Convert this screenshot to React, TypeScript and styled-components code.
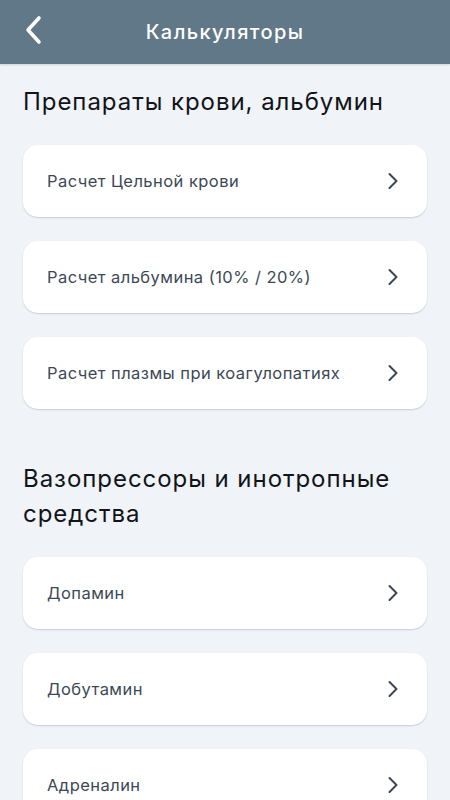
import React from "react";
import styled, { createGlobalStyle } from "styled-components";

const Global = createGlobalStyle`
  html, body { margin: 0; padding: 0; background: #f0f3f8; }
  body { font-family: Inter, "Noto Sans", sans-serif; -webkit-font-smoothing: antialiased; }
  * { box-sizing: border-box; }
`;

const Page = styled.div`
  width: 450px;
  min-height: 800px;
  background: #f0f3f8;
  display: flex;
  flex-direction: column;
`;

const Header = styled.header`
  height: 64px;
  background: #607887;
  display: flex;
  align-items: center;
  justify-content: center;
  position: relative;
  box-shadow: 0 1px 2px rgba(0, 0, 0, 0.15);
`;

const BackButton = styled.button`
  position: absolute;
  left: 18px;
  top: 12px;
  width: 32px;
  height: 36px;
  border: 0;
  padding: 0;
  background: transparent;
  display: flex;
  align-items: center;
  justify-content: center;
`;

const HeaderTitle = styled.h1`
  margin: 0;
  color: #ffffff;
  font-size: 20px;
  font-weight: 500;
  letter-spacing: 1.4px;
`;

const Content = styled.main`
  padding: 20px 23px 0 23px;
  display: flex;
  flex-direction: column;
`;

const Section = styled.section<{ $gap?: number }>`
  display: flex;
  flex-direction: column;
  gap: 24px;
  margin-bottom: ${(p) => p.$gap ?? 0}px;
`;

const SectionTitle = styled.h2`
  margin: 0 0 2px 0;
  font-size: 24px;
  line-height: 35px;
  font-weight: 400;
  color: #111418;
  letter-spacing: 0.95px;
`;

const Card = styled.div`
  height: 72px;
  background: #ffffff;
  border-radius: 15px;
  box-shadow: 0 1px 1.5px rgba(60, 75, 95, 0.22);
  display: flex;
  align-items: center;
  justify-content: space-between;
  padding: 0 28px 0 24px;
`;

const CardLabel = styled.span`
  font-size: 16.5px;
  font-weight: 400;
  color: #3c4855;
  letter-spacing: 0.45px;
`;

const Chevron = () => (
  <svg width="12" height="18" viewBox="0 0 12 18" fill="none">
    <path d="M2.5 2 L9.5 9 L2.5 16" stroke="#3a4756" strokeWidth="2" strokeLinecap="round" strokeLinejoin="round" />
  </svg>
);

const BackIcon = () => (
  <svg width="20" height="30" viewBox="0 0 20 30" fill="none">
    <path d="M15 3 L4 15 L15 27" stroke="#ffffff" strokeWidth="3.6" strokeLinecap="round" strokeLinejoin="round" />
  </svg>
);

const sections = [
  {
    title: "Препараты крови, альбумин",
    items: ["Расчет Цельной крови", "Расчет альбумина (10% / 20%)", "Расчет плазмы при коагулопатиях"],
  },
  {
    title: "Вазопрессоры и инотропные средства",
    items: ["Допамин", "Добутамин", "Адреналин", "Норадреналин"],
  },
];

export default function App() {
  return (
    <Page>
      <Global />
      <Header>
        <BackButton aria-label="Назад">
          <BackIcon />
        </BackButton>
        <HeaderTitle>Калькуляторы</HeaderTitle>
      </Header>
      <Content>
        {sections.map((s, i) => (
          <Section key={s.title} $gap={i === 0 ? 52 : 0}>
            <SectionTitle>{s.title}</SectionTitle>
            {s.items.map((it) => (
              <Card key={it}>
                <CardLabel>{it}</CardLabel>
                <Chevron />
              </Card>
            ))}
          </Section>
        ))}
      </Content>
    </Page>
  );
}
